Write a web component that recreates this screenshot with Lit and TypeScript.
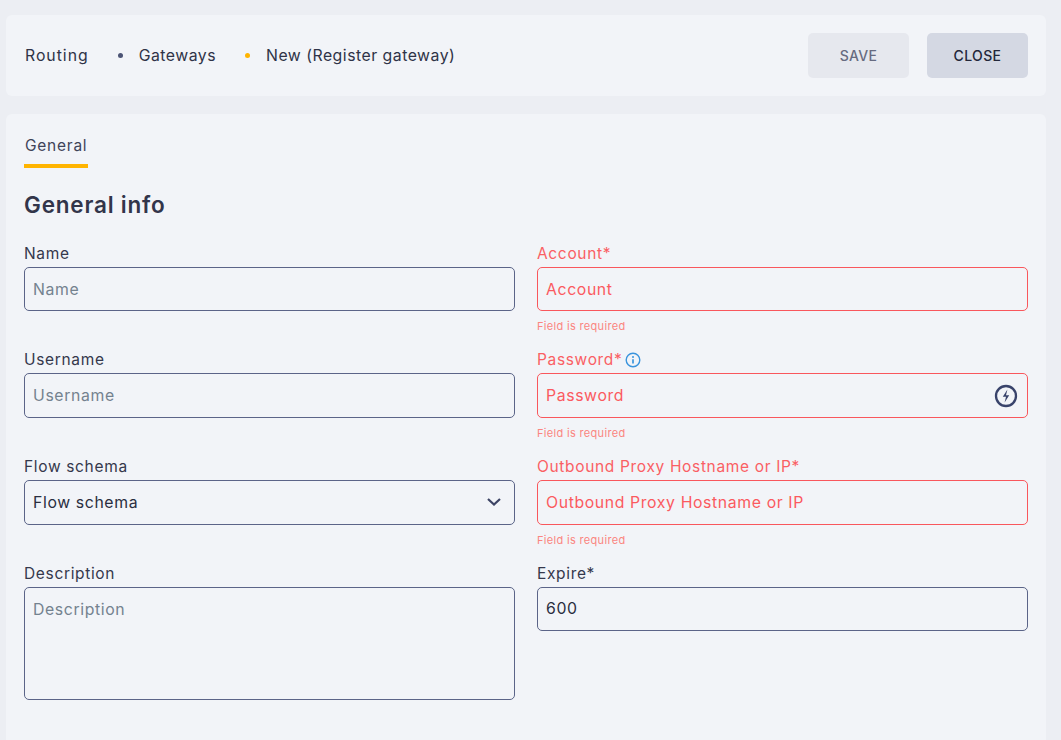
import { LitElement, html, css, nothing } from "lit";
import { customElement, property } from "lit/decorators.js";
import { classMap } from "lit/directives/class-map.js";

const FONT = css`"Inter", "Noto Sans", sans-serif`;

@customElement("form-field")
export class FormField extends LitElement {
  @property() label: string = "";
  @property() placeholder: string = "";
  @property() value: string = "";
  @property() kind: string = "input";
  @property({ type: Boolean }) invalid = false;
  @property({ type: Boolean }) info = false;
  @property({ type: Boolean }) generate = false;

  static styles = css`
    :host {
      display: block;
      font-family: ${FONT};
    }

    .label {
      display: flex;
      align-items: center;
      gap: 3px;
      height: 21px;
      margin-bottom: 3px;
      font-size: 15.5px;
      font-weight: 370;
      letter-spacing: 0.66px;
      color: #35384c;
    }

    .control {
      display: flex;
      align-items: center;
      box-sizing: border-box;
      height: 44.67px;
      padding: 0 12px 0 8px;
      border: 1px solid #5b6488;
      border-radius: 5px;
    }

    .control.textarea {
      height: 113px;
      align-items: flex-start;
      padding-top: 12px;
    }

    input,
    textarea,
    .select-value {
      flex: 1;
      min-width: 0;
      padding: 0;
      border: 0;
      outline: 0;
      resize: none;
      background: transparent;
      font-family: inherit;
      font-size: 15.8px;
      font-weight: 370;
      letter-spacing: 0.62px;
      color: #2a2e40;
    }

    input::placeholder,
    textarea::placeholder {
      color: #74828f;
      opacity: 1;
    }

    .invalid .label {
      color: #fa5f64;
    }

    .invalid .control {
      border-color: #f9575c;
    }

    .invalid input::placeholder {
      color: #fb5a5f;
    }

    .error {
      margin-top: 8.1px;
      height: 14px;
      line-height: 14px;
      font-size: 11px;
      letter-spacing: 0.32px;
      color: #fb8580;
    }

    svg {
      display: block;
      flex: none;
    }

    .generate {
      margin-right: -2.5px;
    }
  `;

  private renderControl() {
    if (this.kind === "textarea") {
      return html`<textarea placeholder=${this.placeholder}></textarea>`;
    }
    if (this.kind === "select") {
      return html`
        <div class="select-value">${this.value}</div>
        <svg width="16" height="10" viewBox="0 0 16 10" fill="none">
          <path d="M2 2l6 5.6L14 2" stroke="#3d4465" stroke-width="2.2" />
        </svg>
      `;
    }
    return html`<input placeholder=${this.placeholder} .value=${this.value} />`;
  }

  render() {
    return html`
      <div class=${classMap({ invalid: this.invalid })}>
        <div class="label">
          <span>${this.label}</span>
          ${this.info
            ? html`<svg width="16" height="16" viewBox="0 0 16 16" fill="none">
                <circle cx="8" cy="8" r="6.8" stroke="#3a94dd" stroke-width="1.4" />
                <path d="M8 7.2v4.2" stroke="#3a94dd" stroke-width="1.7" />
                <circle cx="8" cy="4.9" r="1" fill="#3a94dd" />
              </svg>`
            : nothing}
        </div>
        <div class=${classMap({ control: true, textarea: this.kind === "textarea" })}>
          ${this.renderControl()}
          ${this.generate
            ? html`<svg class="generate" width="24" height="24" viewBox="0 0 24 24" fill="none">
                <circle cx="12" cy="12" r="10" stroke="#39436b" stroke-width="2.3" />
                <path d="M13.4 5.6L8.8 12.8h3.2l-1.4 5.6 4.6-7.2H12z" fill="#39436b" />
              </svg>`
            : nothing}
        </div>
        ${this.invalid ? html`<div class="error">Field is required</div>` : nothing}
      </div>
    `;
  }
}

@customElement("app-root")
export class AppRoot extends LitElement {
  static styles = css`
    :host {
      display: block;
      height: 740px;
      overflow: hidden;
      background: #eceef3;
      font-family: ${FONT};
    }

    .page {
      display: flex;
      flex-direction: column;
      gap: 18px;
      padding: 15px 15px 0 6px;
    }

    .card {
      background: #f2f4f8;
      border-radius: 6px;
    }

    .header {
      display: flex;
      align-items: center;
      justify-content: space-between;
      height: 81px;
      padding: 0 18px;
    }

    .crumbs {
      display: flex;
      align-items: center;
      padding-left: 1px;
      font-size: 15.8px;
      font-weight: 370;
      letter-spacing: 0.5px;
      color: #2f3347;
    }

    .first {
      letter-spacing: 0.98px;
    }

    .dot {
      width: 5px;
      height: 5px;
      margin: 0 16px 0 29px;
      border-radius: 50%;
      background: #4c5475;
    }

    .dot.active {
      background: #ffb400;
    }

    .actions {
      display: flex;
      gap: 18px;
    }

    button {
      width: 101px;
      height: 45px;
      padding: 0;
      border: 0;
      border-radius: 5px;
      font-family: inherit;
      font-size: 14px;
      font-weight: 550;
      letter-spacing: 0.35px;
      color: #23273a;
      background: #d4d8e3;
    }

    button.save {
      color: #666b80;
      background: #e6e8ee;
    }

    .body {
      height: 640px;
      padding: 0 18px;
    }

    .tabs {
      display: flex;
    }

    .tab {
      box-sizing: border-box;
      height: 54px;
      padding: 22px 1px 0;
      border-bottom: 4px solid #ffb400;
      font-size: 15.5px;
      font-weight: 370;
      letter-spacing: 0.75px;
      color: #3f4358;
    }

    h2 {
      margin: 22.5px 0 24.2px;
      font-size: 22.5px;
      line-height: 28px;
      font-weight: 600;
      letter-spacing: 0.8px;
      color: #32354a;
    }

    .grid {
      display: grid;
      grid-template-columns: 491px 491px;
      grid-auto-rows: 106.67px;
      column-gap: 22px;
    }
  `;

  render() {
    return html`
      <div class="page">
        <header class="card header">
          <nav class="crumbs">
            <span class="first">Routing</span>
            <i class="dot"></i>
            <span>Gateways</span>
            <i class="dot active"></i>
            <span>New (Register gateway)</span>
          </nav>
          <div class="actions">
            <button class="save">SAVE</button>
            <button>CLOSE</button>
          </div>
        </header>
        <section class="card body">
          <div class="tabs"><div class="tab">General</div></div>
          <h2>General info</h2>
          <div class="grid">
            <form-field label="Name" placeholder="Name"></form-field>
            <form-field label="Account*" placeholder="Account" invalid></form-field>
            <form-field label="Username" placeholder="Username"></form-field>
            <form-field label="Password*" placeholder="Password" invalid info generate></form-field>
            <form-field label="Flow schema" kind="select" value="Flow schema"></form-field>
            <form-field label="Outbound Proxy Hostname or IP*" placeholder="Outbound Proxy Hostname or IP" invalid></form-field>
            <form-field label="Description" kind="textarea" placeholder="Description"></form-field>
            <form-field label="Expire*" value="600"></form-field>
          </div>
        </section>
      </div>
    `;
  }
}

declare global {
  interface HTMLElementTagNameMap {
    "app-root": AppRoot;
    "form-field": FormField;
  }
}
